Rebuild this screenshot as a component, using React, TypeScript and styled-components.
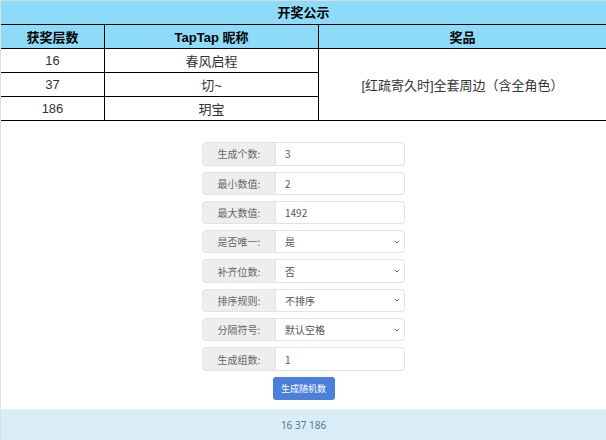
import React from "react";
import styled, { createGlobalStyle } from "styled-components";

const Global = createGlobalStyle`
  html, body { margin: 0; padding: 0; background: #fff; }
  body { font-family: "Liberation Sans", "Noto Sans CJK SC", sans-serif; }
  * { box-sizing: border-box; }
`;

const Page = styled.div`
  width: 606px;
  height: 440px;
  overflow: hidden;
  border-top: 1px solid #d9dadf;
  border-left: 1px solid #dfe0e6;
  display: flex;
  flex-direction: column;
`;

const Title = styled.div`
  height: 24px;
  line-height: 23px;
  background: #8cdcf9;
  border-bottom: 1px solid #000;
  text-align: center;
  font-weight: bold;
  font-size: 13px;
  color: #000;
`;

const Grid = styled.div`
  display: grid;
  grid-template-columns: 104px 214px 1fr;
  grid-auto-rows: 24px;
`;

const Cell = styled.div<{ $head?: boolean; $last?: boolean; $span?: number }>`
  border-bottom: 1px solid #000;
  border-right: ${(p) => (p.$last ? "none" : "1px solid #000")};
  background: ${(p) => (p.$head ? "#8cdcf9" : "#fff")};
  font-weight: ${(p) => (p.$head ? "bold" : "normal")};
  color: ${(p) => (p.$head ? "#000" : "#333")};
  font-size: 13px;
  display: flex;
  align-items: center;
  justify-content: center;
  grid-row: ${(p) => (p.$span ? `span ${p.$span}` : "auto")};
`;

const Form = styled.div`
  padding-top: 21.3px;
  display: flex;
  flex-direction: column;
  align-items: center;
  gap: 6px;
`;

const Row = styled.div`
  width: 203px;
  height: 23.3px;
  display: flex;
  font-family: "Noto Sans CJK SC", sans-serif;
  font-size: 10px;
  color: #555;
`;

const Label = styled.div`
  width: 74px;
  flex: none;
  background: #eee;
  border: 1px solid #e2e2e2;
  border-radius: 4px 0 0 4px;
  display: flex;
  align-items: center;
  justify-content: center;
  color: #666;
`;

const Field = styled.div`
  position: relative;
  flex: 1;
  border: 1px solid #e2e2e2;
  border-left: none;
  border-radius: 0 4px 4px 0;
  background: #fff;
  display: flex;
`;

const TextInput = styled.input`
  width: 100%;
  border: none;
  outline: none;
  background: transparent;
  padding: 0 0 0 9px;
  font: inherit;
  color: #555;
`;

const Select = styled.select`
  width: 100%;
  border: none;
  outline: none;
  background: transparent;
  appearance: none;
  padding: 0 0 0 9px;
  font: inherit;
  color: #555;
`;

const Chevron = styled.svg`
  position: absolute;
  right: 4px;
  top: 50%;
  margin-top: -2px;
  pointer-events: none;
`;

const Button = styled.button`
  margin-top: 0.5px;
  width: 62px;
  height: 22.5px;
  border: none;
  border-radius: 3px;
  background: #4a7fdc;
  color: #fff;
  font-family: "Noto Sans CJK SC", sans-serif;
  font-size: 9px;
  padding: 0;
`;

const Result = styled.div`
  margin-top: 9.5px;
  height: 40px;
  background: #d9edf7;
  border-top: 1px solid #e3f2f9;
  text-align: center;
  line-height: 30px;
  font-family: "Noto Sans", "Noto Sans CJK SC", sans-serif;
  font-size: 10px;
  color: #4b7896;
`;

const Down = () => (
  <Chevron width="6" height="4" viewBox="0 0 6 4">
    <path d="M0.8 0.8 L3 3 L5.2 0.8" fill="none" stroke="#666" strokeWidth="1" />
  </Chevron>
);

type F = { label: string; value: string; options?: string[] };

const fields: F[] = [
  { label: "生成个数:", value: "3" },
  { label: "最小数值:", value: "2" },
  { label: "最大数值:", value: "1492" },
  { label: "是否唯一:", value: "是", options: ["是", "否"] },
  { label: "补齐位数:", value: "否", options: ["否", "是"] },
  { label: "排序规则:", value: "不排序", options: ["不排序", "升序", "降序"] },
  { label: "分隔符号:", value: "默认空格", options: ["默认空格", "逗号", "换行"] },
  { label: "生成组数:", value: "1" },
];

const winners = [
  ["16", "春风启程"],
  ["37", "切~"],
  ["186", "玥宝"],
];

export default function App() {
  return (
    <>
      <Global />
      <Page>
        <Title>开奖公示</Title>
        <Grid>
          <Cell $head>获奖层数</Cell>
          <Cell $head>TapTap 昵称</Cell>
          <Cell $head $last>奖品</Cell>
          {winners.map(([n, name], i) => (
            <React.Fragment key={n}>
              <Cell>{n}</Cell>
              <Cell>{name}</Cell>
              {i === 0 && (
                <Cell $last $span={3}>
                  [红疏寄久时]全套周边（含全角色）
                </Cell>
              )}
            </React.Fragment>
          ))}
        </Grid>
        <Form>
          {fields.map((f) => (
            <Row key={f.label}>
              <Label>{f.label}</Label>
              <Field>
                {f.options ? (
                  <>
                    <Select defaultValue={f.value}>
                      {f.options.map((o) => (
                        <option key={o}>{o}</option>
                      ))}
                    </Select>
                    <Down />
                  </>
                ) : (
                  <TextInput defaultValue={f.value} />
                )}
              </Field>
            </Row>
          ))}
          <Button>生成随机数</Button>
        </Form>
        <Result>16 37 186</Result>
      </Page>
    </>
  );
}
